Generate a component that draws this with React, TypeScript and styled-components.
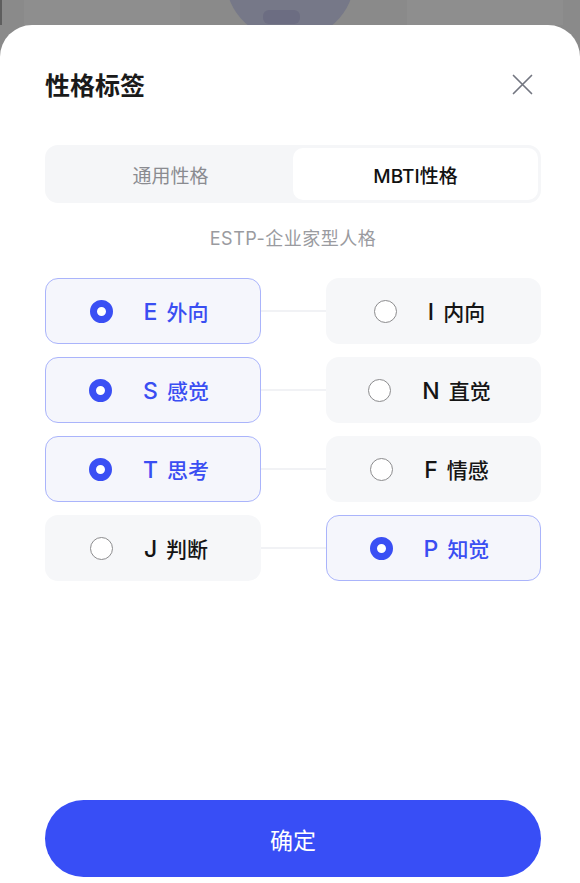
import styled, { createGlobalStyle } from "styled-components";

const GlobalStyle = createGlobalStyle`
  html, body {
    margin: 0;
    padding: 0;
    background: #8a8a8a;
  }
  * {
    box-sizing: border-box;
  }
  body {
    font-family: "Inter", "Noto Sans CJK SC", "Noto Sans", sans-serif;
  }
`;

type Trait = { letter: string; label: string; selected: boolean };

const pairs: [Trait, Trait][] = [
  [
    { letter: "E", label: "外向", selected: true },
    { letter: "I", label: "内向", selected: false },
  ],
  [
    { letter: "S", label: "感觉", selected: true },
    { letter: "N", label: "直觉", selected: false },
  ],
  [
    { letter: "T", label: "思考", selected: true },
    { letter: "F", label: "情感", selected: false },
  ],
  [
    { letter: "J", label: "判断", selected: false },
    { letter: "P", label: "知觉", selected: true },
  ],
];

const TraitCard = ({ trait }: { trait: Trait }) => (
  <Card $selected={trait.selected}>
    <Radio $selected={trait.selected} />
    <CardText $selected={trait.selected}>
      <Letter>{trait.letter}</Letter>
      <Label>{trait.label}</Label>
    </CardText>
  </Card>
);

const App = () => {
  return (
    <Page>
      <GlobalStyle />
      <Backdrop>
        <svg width="580" height="25" viewBox="0 0 580 25">
          <rect x="0" y="0" width="2" height="25" fill="#5e5e5e" />
          <rect x="24" y="0" width="156" height="25" fill="#8e8e8e" />
          <rect x="407" y="0" width="156" height="25" fill="#8e8e8e" />
          <ellipse cx="290" cy="-20" rx="64" ry="60" fill="#767888" />
          <rect x="263" y="10" width="37" height="14" rx="6" fill="#6c6d82" />
        </svg>
      </Backdrop>
      <Sheet>
        <Header>
          <Title>性格标签</Title>
          <CloseButton aria-label="close">
            <svg width="21" height="21" viewBox="0 0 21 21">
              <path
                d="M1.5 1.5 L19.5 19.5 M19.5 1.5 L1.5 19.5"
                stroke="#737680"
                strokeWidth="1.7"
                strokeLinecap="round"
              />
            </svg>
          </CloseButton>
        </Header>

        <Tabs>
          <Tab $active={false}>通用性格</Tab>
          <Tab $active>MBTI性格</Tab>
        </Tabs>

        <Subtitle>ESTP-企业家型人格</Subtitle>

        <TraitGrid>
          {pairs.map(([a, b]) => (
            <Row key={a.letter}>
              <TraitCard trait={a} />
              <Connector />
              <TraitCard trait={b} />
            </Row>
          ))}
        </TraitGrid>

        <ConfirmButton>确定</ConfirmButton>
      </Sheet>
    </Page>
  );
};

export default App;

const Page = styled.div`
  width: 580px;
  height: 883px;
  display: flex;
  flex-direction: column;
  overflow: hidden;
  background: #8a8a8a;
`;

const Backdrop = styled.div`
  height: 25px;
  flex-shrink: 0;
  display: flex;
  & > svg {
    display: block;
  }
`;

const Sheet = styled.div`
  flex: 1;
  display: flex;
  flex-direction: column;
  background: #ffffff;
  border-radius: 32px 32px 0 0;
  padding: 46px 39px 6px 45px;
`;

const Header = styled.div`
  display: flex;
  align-items: center;
  justify-content: space-between;
  height: 30px;
`;

const Title = styled.h1`
  margin: 0;
  font-size: 25px;
  font-weight: 700;
  color: #1a1a1a;
  line-height: 30px;
`;

const CloseButton = styled.button`
  border: none;
  background: none;
  padding: 0;
  margin-right: 8px;
  margin-top: -3px;
  width: 21px;
  height: 21px;
  display: flex;
  cursor: pointer;
`;

const Tabs = styled.div`
  margin-top: 44px;
  height: 58px;
  display: grid;
  grid-template-columns: 1fr 1fr;
  padding: 3px;
  background: #f5f6f8;
  border-radius: 13px;
`;

const Tab = styled.div<{ $active: boolean }>`
  display: flex;
  align-items: center;
  justify-content: center;
  border-radius: 10px;
  font-size: 19px;
  font-weight: ${(p) => (p.$active ? 500 : 400)};
  color: ${(p) => (p.$active ? "#111111" : "#8a8b90")};
  background: ${(p) => (p.$active ? "#ffffff" : "transparent")};
`;

const Subtitle = styled.div`
  margin-top: 24px;
  text-align: center;
  font-size: 18px;
  line-height: 24px;
  letter-spacing: 0.5px;
  color: #9a9ba0;
`;

const TraitGrid = styled.div`
  margin-top: 27px;
  display: flex;
  flex-direction: column;
  gap: 13px;
`;

const Row = styled.div`
  display: grid;
  grid-template-columns: 216px 65px 1fr;
  align-items: center;
  height: 66px;
`;

const Connector = styled.div`
  height: 2px;
  background: #f1f2f5;
`;

const Card = styled.div<{ $selected: boolean }>`
  height: 66px;
  display: flex;
  align-items: center;
  justify-content: center;
  gap: 31px;
  padding-right: 8px;
  border-radius: 13px;
  background: ${(p) => (p.$selected ? "#f5f6fc" : "#f6f7f9")};
  border: 1.5px solid ${(p) => (p.$selected ? "#aab4fb" : "transparent")};
`;

const Radio = styled.span<{ $selected: boolean }>`
  width: 23px;
  height: 23px;
  border-radius: 50%;
  flex-shrink: 0;
  border: ${(p) =>
    p.$selected ? "7.5px solid #3a4ff4" : "1.5px solid #8c8c8e"};
  background: #ffffff;
`;

const CardText = styled.div<{ $selected: boolean }>`
  display: flex;
  align-items: baseline;
  gap: 9px;
  color: ${(p) => (p.$selected ? "#3a4ef2" : "#151515")};
  font-weight: 500;
`;

const Letter = styled.span`
  font-size: 23px;
`;

const Label = styled.span`
  font-size: 21px;
`;

const ConfirmButton = styled.button`
  margin-top: auto;
  height: 77px;
  width: 100%;
  border: none;
  border-radius: 39px;
  background: #384ef6;
  color: #ffffff;
  font-family: inherit;
  font-size: 23px;
  font-weight: 400;
  cursor: pointer;
`;
